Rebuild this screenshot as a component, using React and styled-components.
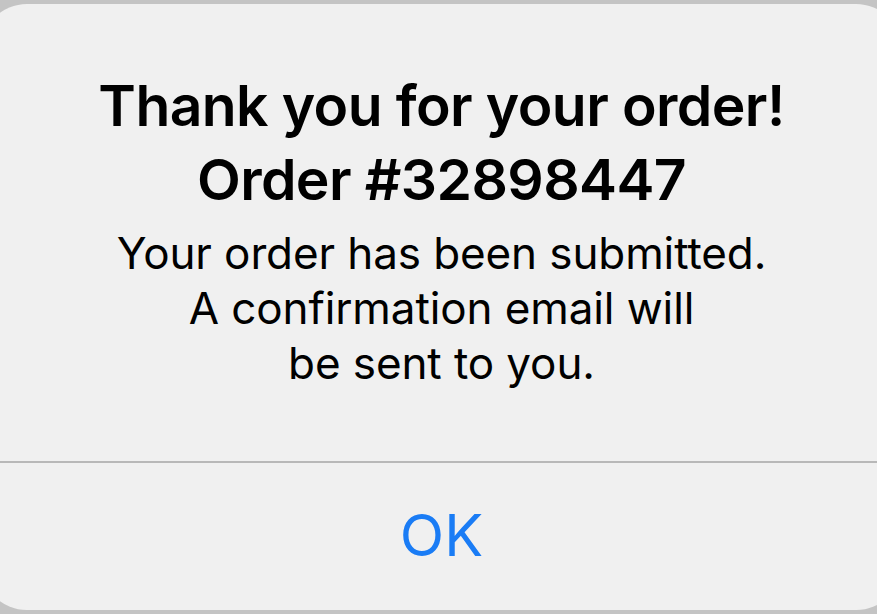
import React from 'react';
import styled, { createGlobalStyle } from 'styled-components';

const GlobalStyle = createGlobalStyle`
  html, body {
    margin: 0;
    padding: 0;
    background: #c4c4c4;
    overflow: hidden;
  }
  body {
    font-family: Inter, "Noto Sans", "Liberation Sans", sans-serif;
  }
`

const Page = styled.div`
  width: 877px;
  height: 614px;
  padding-top: 4px;
  box-sizing: border-box;
  overflow: hidden;
`

const Alert = styled.div`
  margin: 0 -25px 0 -19px;
  height: 606px;
  background: #f0f0f0;
  border-radius: 46px;
  display: flex;
  flex-direction: column;
  overflow: hidden;
`

const Content = styled.div`
  height: 457px;
  box-sizing: border-box;
  padding-top: 65px;
  display: flex;
  flex-direction: column;
  align-items: center;
  text-align: center;
  color: #000;
`

const Title = styled.h1`
  margin: 0;
  font-size: 57px;
  font-weight: 600;
  line-height: 74px;
  letter-spacing: -0.6px;
`

const Message = styled.p`
  margin: 9px 0 0;
  font-size: 44px;
  font-weight: 400;
  line-height: 55px;
  letter-spacing: -0.1px;
`

const Divider = styled.div`
  height: 2px;
  background: #b8b8b8;
`

const Button = styled.button`
  flex: 1;
  border: none;
  background: transparent;
  font-family: inherit;
  font-size: 58px;
  font-weight: 400;
  color: #1a7cf5;
  padding: 0 0 4px;
  cursor: pointer;
`

export default function App() {
  return (
    <Page>
      <GlobalStyle />
      <Alert>
        <Content>
          <Title>
            Thank you for your order!<br />
            Order #32898447
          </Title>
          <Message>
            Your order has been submitted.<br />
            A confirmation email will<br />
            be sent to you.
          </Message>
        </Content>
        <Divider />
        <Button>OK</Button>
      </Alert>
    </Page>
  );
}
